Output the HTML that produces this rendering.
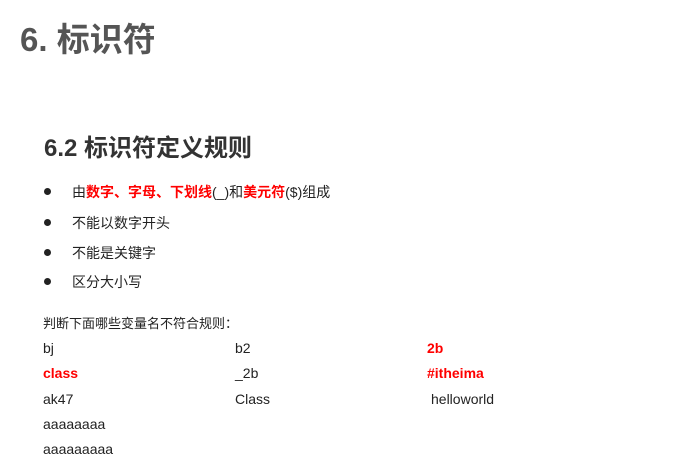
<!DOCTYPE html>
<html><head><meta charset="utf-8"><style>
body{margin:0;width:687px;height:467px;background:#fff;font-family:"Liberation Sans","Noto Sans CJK SC",sans-serif;position:relative;overflow:hidden}
.a{position:absolute;white-space:nowrap}
h1{position:absolute;left:20px;top:20px;margin:0;font-size:33px;line-height:40px;color:#555;font-weight:bold}
h2{position:absolute;left:44px;top:134px;margin:0;font-size:24px;line-height:30px;color:#333;font-weight:bold}
.li{font-size:14px;color:#222;left:72px;line-height:18px}
.dot{position:absolute;left:44px;width:7px;height:7px;border-radius:50%;background:#222}
.t{font-size:14px;color:#222;line-height:18px}
.r,.t.r{color:#f00;font-weight:bold}
</style></head><body>
<h1>6. 标识符</h1>
<h2>6.2 标识符定义规则</h2>
<div class="dot" style="top:188px"></div><div class="a li" style="top:183px">由<span class="r">数字、字母、下划线</span>(_)和<span class="r">美元符</span>($)组成</div>
<div class="dot" style="top:219px"></div><div class="a li" style="top:214px">不能以数字开头</div>
<div class="dot" style="top:249px"></div><div class="a li" style="top:244px">不能是关键字</div>
<div class="dot" style="top:278px"></div><div class="a li" style="top:273px">区分大小写</div>
<div class="a t" style="left:43px;top:315px;font-size:13px">判断下面哪些变量名不符合规则：</div>
<div class="a t" style="left:43px;top:339px">bj</div><div class="a t" style="left:235px;top:339px">b2</div><div class="a t r" style="left:427px;top:339px">2b</div>
<div class="a t r" style="left:43px;top:364px">class</div><div class="a t" style="left:235px;top:364px">_2b</div><div class="a t r" style="left:427px;top:364px">#itheima</div>
<div class="a t" style="left:43px;top:390px">ak47</div><div class="a t" style="left:235px;top:390px">Class</div><div class="a t" style="left:431px;top:390px">helloworld</div>
<div class="a t" style="left:43px;top:415px">aaaaaaaa</div>
<div class="a t" style="left:43px;top:440px">aaaaaaaaa</div>
</body></html>
